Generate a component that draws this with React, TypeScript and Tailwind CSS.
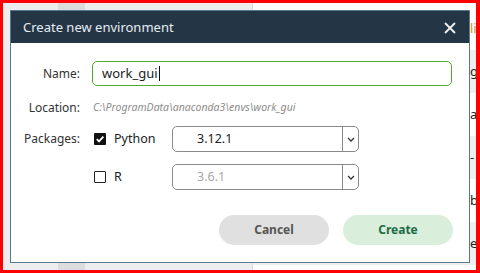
import React from 'react';

const font = { fontFamily: '"Noto Sans", "Open Sans", Arial, sans-serif' };

const Chevron: React.FC = () => (
    <svg width="8" height="5" viewBox="0 0 8 5" className="text-[#333]">
        <polyline points="1,1 4,4 7,1" fill="none" stroke="currentColor" strokeWidth="1.3" />
    </svg>
);

const VersionSelect: React.FC<{ value: string; muted?: boolean }> = ({ value, muted }) => (
    <div className="flex h-[26px] w-[187px] items-stretch rounded-[5px] border border-[#8a8a8a] bg-white">
        <div className={`flex flex-1 items-center pl-[24px] text-[12.5px] ${muted ? 'text-[#a8a8a8]' : 'text-[#222]'}`}>
            {value}
        </div>
        <div className="flex w-[16px] items-center justify-center border-l border-[#8a8a8a]">
            <Chevron />
        </div>
    </div>
);

const Checkbox: React.FC<{ checked?: boolean }> = ({ checked }) =>
    checked ? (
        <div className="flex h-[12px] w-[12px] items-center justify-center rounded-[1px] bg-[#111]">
            <svg width="10" height="10" viewBox="0 0 10 10">
                <polyline points="1.8,5.2 4,7.4 8.4,2.6" fill="none" stroke="white" strokeWidth="1.8" />
            </svg>
        </div>
    ) : (
        <div className="h-[12px] w-[12px] rounded-[1px] border-[1.5px] border-[#222] bg-white" />
    );

// rows of the table sitting behind the dialog, only their first letters peek out
const bgRows = [
    { text: 'li', grey: false, color: 'text-[#d08a2c]' },
    { text: 'g', grey: true, color: 'text-[#222]' },
    { text: 'a', grey: false, color: 'text-[#222]' },
    { text: '-', grey: true, color: 'text-[#222]' },
    { text: 'b', grey: false, color: 'text-[#222]' },
    { text: 'e', grey: true, color: 'text-[#222]' },
];

const App: React.FC = () => {
    return (
        <div className="h-[273px] w-[480px] overflow-hidden bg-white" style={font}>
            <div className="relative h-[273px] w-[480px] border-t-[3px] border-r-[4px] border-b-[3px] border-l-[3px] border-[#ff0000]">
                {/* background app */}
                <div className="flex h-full w-full">
                    <div className="flex h-full w-[250px] border-r border-[#dadada] bg-[#ededed]">
                        <div className="ml-[55px] h-full w-[27px] bg-[#dcdcdc]" />
                    </div>
                    <div className="flex h-full flex-1 flex-col overflow-hidden bg-white pt-[4px]">
                        {bgRows.map((row, i) => (
                            <div
                                key={i}
                                className={`flex h-[43px] shrink-0 items-center pl-[217px] text-[13px] ${row.grey ? 'bg-[#eeeeee]' : 'bg-white'} ${row.color}`}
                            >
                                {row.text}
                            </div>
                        ))}
                    </div>
                </div>

                {/* dialog */}
                <div className="absolute left-[7px] top-[7px] flex h-[253px] w-[460px] flex-col border border-[#587a8e] bg-white">
                    <div className="flex h-[32px] shrink-0 items-center justify-between bg-[#243545] pt-[1px] pl-[12px] pr-[13px]">
                        <span className="text-[13px] text-[#e6edf2]">Create new environment</span>
                        <svg width="12" height="12" viewBox="0 0 12 12">
                            <path d="M1 1 L11 11 M11 1 L1 11" stroke="#f2f2f2" strokeWidth="1.8" />
                        </svg>
                    </div>

                    <div className="flex flex-col pt-[18px]">
                        <div className="flex h-[25px] items-center">
                            <div className="w-[69px] text-right text-[12px] text-[#333]">Name:</div>
                            <div className="ml-[12px] flex h-[25px] w-[360px] items-center rounded-[5px] border border-[#4cae2c] pl-[9px] text-[13px] text-[#222]">
                                work_gui
                                <span className="ml-[1px] h-[15px] w-px bg-[#111]" />
                            </div>
                        </div>

                        <div className="mt-[14px] flex h-[16px] items-center">
                            <div className="w-[69px] text-right text-[12px] text-[#333]">Location:</div>
                            <div className="ml-[13px] text-[10.5px] italic text-[#8c8c8c]">
                                C:\ProgramData\anaconda3\envs\work_gui
                            </div>
                        </div>

                        <div className="mt-[10px] flex items-start">
                            <div className="mt-[4px] w-[69px] text-right text-[12px] text-[#333]">Packages:</div>
                            <div className="ml-[14px] flex flex-col gap-[12px]">
                                <div className="flex items-center">
                                    <Checkbox checked />
                                    <span className="ml-[8px] w-[58px] text-[12.5px] text-[#222]">Python</span>
                                    <VersionSelect value="3.12.1" />
                                </div>
                                <div className="flex items-center">
                                    <Checkbox />
                                    <span className="ml-[8px] w-[58px] text-[12.5px] text-[#222]">R</span>
                                    <VersionSelect value="3.6.1" muted />
                                </div>
                            </div>
                        </div>

                        <div className="mt-[25px] flex justify-end gap-[14px] pr-[16px]">
                            <button className="flex h-[30px] w-[110px] items-center justify-center rounded-full bg-[#e0e0e0] text-[12px] font-bold text-[#555]">
                                Cancel
                            </button>
                            <button className="flex h-[30px] w-[110px] items-center justify-center rounded-full bg-[#d9eedb] text-[12px] font-bold text-[#1c6b45]">
                                Create
                            </button>
                        </div>
                    </div>
                </div>
            </div>
        </div>
    );
};

export default App;
